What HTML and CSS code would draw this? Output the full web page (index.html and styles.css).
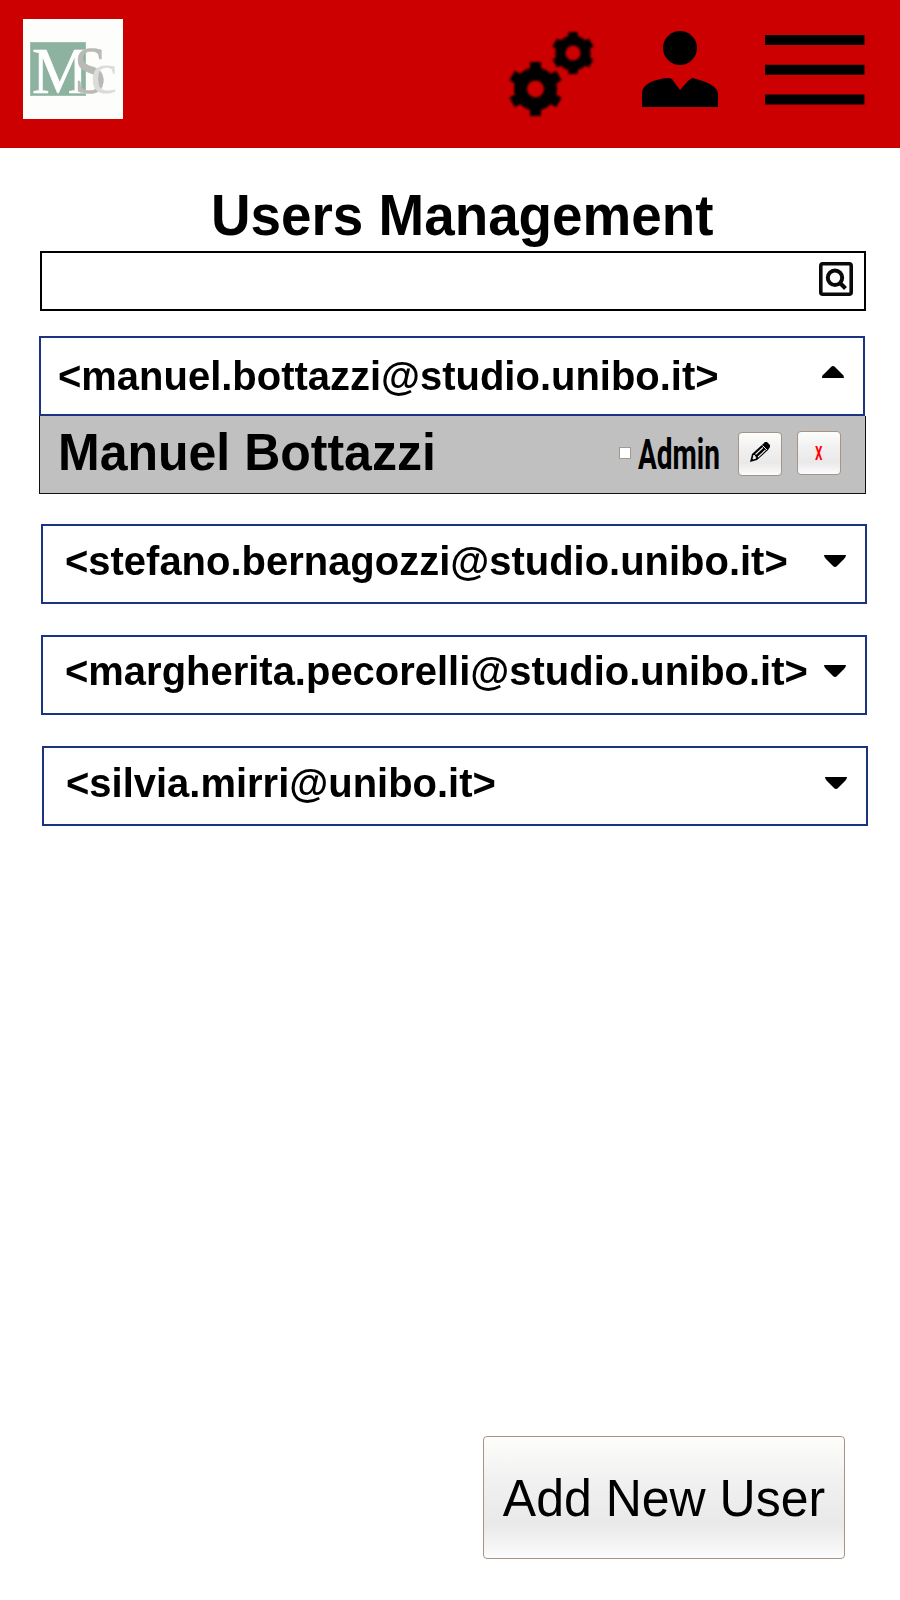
FILE: index.html
```html
<!DOCTYPE html>
<html lang="en">
<head>
<meta charset="utf-8">
<title>Users Management</title>
<link rel="stylesheet" href="styles.css">
</head>
<body>
<header class="topbar">
  <svg class="logo" viewBox="0 0 100 100">
    <rect width="100" height="100" fill="#fdfefc"/>
    <rect x="7.5" y="23.5" width="55" height="53" fill="#8db2a0" stroke="#a0c0b0"/>
    <text x="9" y="74" font-size="66" fill="#fff" stroke="#fff" stroke-width=".6" textLength="56" lengthAdjust="spacingAndGlyphs">M</text>
    <text x="51" y="74" font-size="67" fill="#b9b9b6" stroke="#b9b9b6" stroke-width=".5" textLength="33" lengthAdjust="spacingAndGlyphs">S</text>
    <text x="67.5" y="74" font-size="60" fill="#dcdcda">c</text>
  </svg>
  <nav class="actions">
    <svg class="gears" viewBox="0 0 84 86">
      <g transform="translate(25.5 57)" fill="none" stroke="#000">
        <circle r="15" stroke-width="13"/>
        <path stroke-width="11" stroke-linejoin="round" d="M0-18V-27M0 18V27M15.6-9L23.4-13.5M15.6 9L23.4 13.5M-15.6-9L-23.4-13.5M-15.6 9L-23.4 13.5"/>
      </g>
      <g transform="translate(63 21)" fill="none" stroke="#000">
        <circle r="12.6" stroke-width="10"/>
        <path stroke-width="9.5" d="M0-14V-21M0 14V21M12.1-7L18.2-10.5M12.1 7L18.2 10.5M-12.1-7L-18.2-10.5M-12.1 7L-18.2 10.5"/>
      </g>
    </svg>
    <svg class="person" viewBox="0 0 76 76">
      <circle cx="38" cy="17" r="17"/>
      <path d="M0 76V61C1 54 10 48 27 47L30 48L38 59L46 50L50 47C64 50 75 55 76 62V76Z"/>
    </svg>
    <svg class="menu" viewBox="0 0 100 71"><path d="M0 0H99.5V10H0ZM0 29.7H99.5V39.7H0ZM0 59.5H99.5V69.5H0Z"/></svg>
  </nav>
</header>
<main class="page">
  <h1 class="title">Users Management</h1>
  <div class="search">
    <svg class="search-icon" viewBox="0 0 34 34" fill="none" stroke="#0a0a0a">
      <rect x="1.8" y="1.8" width="30.4" height="30.4" rx="2" stroke-width="3.6"/>
      <circle cx="16" cy="15.8" r="7.2" stroke-width="4"/>
      <path d="M20.5 20.5L26.5 26.5" stroke-width="4"/>
    </svg>
  </div>
  <section class="user user-open">
    <span class="email">&lt;manuel.bottazzi@studio.unibo.it&gt;</span>
    <svg class="caret" viewBox="0 0 22 12"><path d="M0 12Q-.2 9 2 8L9 1Q11-1 13 1L20 8Q22 9 22 12Z"/></svg>
  </section>
  <div class="details">
    <span class="name">Manuel Bottazzi</span>
    <span class="checkbox"></span>
    <svg class="admin" viewBox="0 0 84 50"><text x="0" y="39" textLength="82" lengthAdjust="spacingAndGlyphs">Admin</text></svg>
    <button class="btn edit">
      <svg viewBox="0 0 20 20">
        <path d="M0 20L2 12L13 2L15 0H17L20 3V5L18 8L7 18Z"/>
        <path d="M3 17L4 13L6 16ZM12.5 3.5L17 8" fill="#eee" stroke="#eee" stroke-width="1"/>
        <path d="M5.5 12.5L13 5.5M8 15L15.5 8" stroke="#eee" stroke-width="1.1"/>
      </svg>
    </button>
    <button class="btn remove">
      <svg viewBox="0 0 8 14"><text x="0" y="14" textLength="7.5" lengthAdjust="spacingAndGlyphs">x</text></svg>
    </button>
  </div>
  <section class="user second">
    <span class="email">&lt;stefano.bernagozzi@studio.unibo.it&gt;</span>
    <svg class="caret" viewBox="0 0 22 12"><path d="M0 0H22Q22 2 20 4L13 11Q11 13 9 11L2 4Q0 2 0 0Z"/></svg>
  </section>
  <section class="user third">
    <span class="email">&lt;margherita.pecorelli@studio.unibo.it&gt;</span>
    <svg class="caret" viewBox="0 0 22 12"><path d="M0 0H22Q22 2 20 4L13 11Q11 13 9 11L2 4Q0 2 0 0Z"/></svg>
  </section>
  <section class="user fourth">
    <span class="email">&lt;silvia.mirri@unibo.it&gt;</span>
    <svg class="caret" viewBox="0 0 22 12"><path d="M0 0H22Q22 2 20 4L13 11Q11 13 9 11L2 4Q0 2 0 0Z"/></svg>
  </section>
  <button class="btn add"><span class="add-label">Add New User</span></button>
</main>
</body>
</html>
```
FILE: styles.css
```css
* { box-sizing: border-box; }
body {
  margin: 0;
  height: 1600px;
  display: flex;
  flex-direction: column;
  background: #fff;
  color: #000;
  font-family: "Liberation Sans", Arial, sans-serif;
}
svg { display: block; flex: none; }
.topbar {
  height: 148px;
  flex: none;
  display: flex;
  justify-content: space-between;
  align-items: flex-start;
  padding: 19px 35px 0 23px;
  background: #cc0000;
}
.logo { width: 100px; height: 100px; font-family: "Liberation Serif", serif; }
.actions { display: flex; align-items: flex-start; padding-top: 12px; }
.gears { width: 84px; height: 86px; margin: 1px 48px 0 0; overflow: visible; filter: blur(1px); }
.person { width: 76px; height: 76px; margin-right: 47px; overflow: visible; filter: blur(.7px); }
.menu { width: 100px; height: 71px; margin-top: 4px; overflow: visible; filter: blur(.4px); }
.page {
  flex: 1;
  display: flex;
  flex-direction: column;
  align-items: flex-start;
  padding: 36px 0 41px 39px;
}
.title {
  margin: 0 0 0 172px;
  height: 67px;
  line-height: 64px;
  font-size: 54.8px;
  font-weight: bold;
  white-space: nowrap;
  transform: scaleY(1.04);
  transform-origin: 0 51px;
}
.search {
  width: 826px;
  height: 60px;
  margin-left: 1px;
  display: flex;
  justify-content: flex-end;
  padding: 9px 11px 0;
  border: 2px solid #000;
}
.search-icon { width: 34px; height: 34px; }
.user {
  width: 826px;
  height: 80px;
  flex: none;
  display: flex;
  justify-content: space-between;
  align-items: flex-start;
  padding: 12px 19px 0 22px;
  border: 2px solid #1c3384;
}
.email {
  font-size: 40px;
  line-height: 46px;
  font-weight: bold;
  white-space: nowrap;
  transform: scale(.999, 1.03);
  transform-origin: 0 37px;
}
.caret { width: 22px; height: 12px; margin-top: 17px; }
.user-open { margin-top: 25px; padding: 15px 19px 0 17px; }
.user-open .caret { margin-top: 13px; }
.second { margin: 30px 0 0 2px; }
.third { margin: 31px 0 0 2px; padding-top: 11px; }
.fourth { margin: 31px 0 0 3px; }
.details {
  width: 827px;
  height: 78px;
  flex: none;
  display: flex;
  align-items: flex-start;
  padding: 0 24px 0 18px;
  background: #c0c0c0;
  border: solid #111;
  border-width: 0 1px 1px;
}
.name {
  width: 561px;
  flex: none;
  padding-top: 8px;
  font-size: 50px;
  line-height: 58px;
  font-weight: bold;
  white-space: nowrap;
  transform: scaleY(1.04);
  transform-origin: 0 54px;
}
.checkbox {
  width: 12px;
  height: 12px;
  flex: none;
  margin-top: 31px;
  background: #fff;
  border: 1px solid #a49a8c;
}
.admin {
  width: 84px;
  height: 50px;
  margin: 14px 16px 0 7px;
  overflow: visible;
  font: 700 43px Roboto, sans-serif;
}
.btn {
  padding: 0;
  border: 1px solid #a39686;
  border-radius: 4px;
  background: linear-gradient(#fdfefb, #f1f1f1 35%, #e9e9e9 71%, #fcfbfd);
  color: #000;
  font-family: inherit;
}
.edit, .remove {
  width: 44px;
  height: 44px;
  flex: none;
  display: flex;
  justify-content: center;
  align-items: center;
}
.edit { margin: 16px 15px 0 0; }
.edit svg { width: 20px; height: 20px; margin-bottom: 4px; }
.remove { margin-top: 15px; }
.remove svg { width: 8px; height: 14px; overflow: visible; font: 500 25px Roboto, sans-serif; fill: #f00; }
.add {
  width: 362px;
  height: 123px;
  margin: auto 0 0 444px;
  font-size: 50px;
  white-space: nowrap;
}
.add-label {
  display: block;
  transform: scaleY(1.04);
}
```
